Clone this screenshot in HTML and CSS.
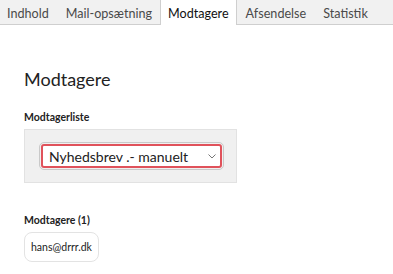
FILE: index.html
```html
<!DOCTYPE html>
<html lang="da">
<head>
    <meta charset="UTF-8">
    <title>Modtagere</title>
    <link rel="stylesheet" href="styles.css">
</head>
<body>
<div class="tabs">
    <span class="tab">Indhold</span>
    <span class="tab">Mail-opsætning</span>
    <span class="tab active">Modtagere</span>
    <span class="tab">Afsendelse</span>
    <span class="tab">Statistik</span>
</div>
<div class="content">
    <h2 class="title">Modtagere</h2>
    <div class="label">Modtagerliste</div>
    <div class="selectBox">
        <div class="select">
            <span>Nyhedsbrev .- manuelt</span>
            <svg class="caret" width="8" height="5" viewBox="0 0 8 5"><path d="M0.5 0.5 L4 4 L7.5 0.5" fill="none" stroke="#777" stroke-width="1"/></svg>
        </div>
    </div>
    <div class="label second">Modtagere (1)</div>
    <div class="chip">hans@drrr.dk</div>
</div>
</body>
</html>
```

FILE: styles.css
```css
body{
    margin: 0;
    font-family: Lato, "Open Sans", sans-serif;
    color: #222;
    background: #fff;
}
.tabs{
    display: flex;
    background: #f1f1f1;
    border-bottom: 1px solid #cfcfcf;
    height: 24px;
}
.tab{
    white-space: nowrap;
    flex-shrink: 0;
    font-size: 12.6px;
    color: #4a4a4a;
    padding: 5px 8px 0 9px;
    line-height: 17px;
}
.tab:first-child{
    padding-left: 7px;
}
.active{
    background: #fff;
    color: #111;
    border-left: 1px solid #cfcfcf;
    border-right: 1px solid #cfcfcf;
    margin-bottom: -1px;
    padding: 5px 7px 0 7px;
    height: 20px;
}
.content{
    padding: 0 24px;
}
.title{
    font-size: 18px;
    font-weight: normal;
    margin: 43px 0 0;
    line-height: 22px;
}
.label{
    font-size: 10.5px;
    font-weight: bold;
    margin-top: 20px;
    line-height: 14px;
}
.second{
    margin-top: 30px;
}
.selectBox{
    width: 213px;
    height: 54px;
    margin-top: 5px;
    background: #f0f0f0;
    border: 1px solid #e2e2e2;
    padding: 14px 0 0 16px;
    box-sizing: border-box;
}
.select{
    width: 181px;
    height: 24px;
    box-sizing: border-box;
    background: #fff;
    border: 2px solid #e0525b;
    border-radius: 3px;
    outline: 1px solid #c9c9c9;
    outline-offset: 1px;
    display: flex;
    align-items: center;
    justify-content: space-between;
    padding: 0 4px 0 6px;
    font-size: 14px;
    color: #222;
}
.caret{
    margin-top: 1px;
}
.chip{
    display: inline-block;
    margin-top: 5px;
    border: 1px solid #e3e3e3;
    border-radius: 8px;
    padding: 8px 6px;
    font-size: 10.5px;
    line-height: 12px;
}
```
